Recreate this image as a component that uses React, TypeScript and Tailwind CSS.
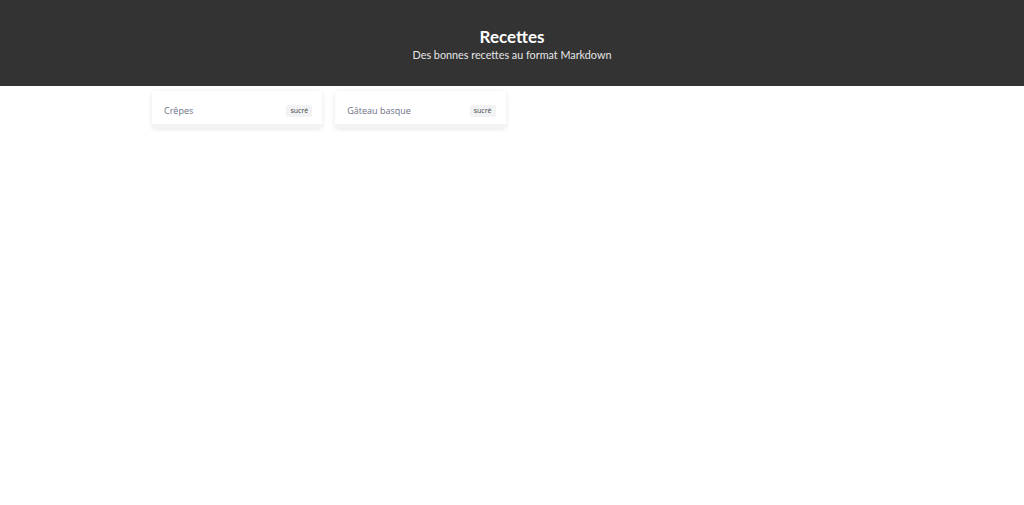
const recipes = [
  { title: 'Crêpes', tag: 'sucré' },
  { title: 'Gâteau basque', tag: 'sucré' },
];

const RecipeCard = ({ title, tag }: { title: string; tag: string }) => (
  <div className="flex flex-col overflow-hidden rounded-[3px] bg-white shadow-[0_1px_5px_rgba(0,0,0,0.1)]">
    <div className="flex h-[33px] items-center justify-between pt-[7px] pr-[10px] pl-[12px]">
      <span className="font-['Open_Sans',sans-serif] text-[9px] leading-[12px] text-[#6b6f85]">{title}</span>
      <span className="rounded-[2px] bg-[#f1f2f4] px-[4px] py-[2px] font-['Open_Sans',sans-serif] text-[7px] leading-[8px] text-[#444]">{tag}</span>
    </div>
    <div className="h-[4px] bg-[#f3f4f5]" />
  </div>
);

export default function App() {
  return (
    <div className="min-h-screen bg-white font-['Lato',sans-serif]">
      <header className="flex h-[86px] flex-col items-center justify-center bg-[#333333] pt-[1px] text-white">
        <h1 className="text-[17px] leading-[23px] font-bold">Recettes</h1>
        <p className="text-[10.8px] leading-[14px] text-[#e6e6e6]">Des bonnes recettes au format Markdown</p>
      </header>
      <main className="mx-auto grid w-[720px] grid-cols-4 gap-[13px] pt-[5px]">
        {recipes.map((r) => (
          <RecipeCard key={r.title} {...r} />
        ))}
      </main>
    </div>
  );
}
